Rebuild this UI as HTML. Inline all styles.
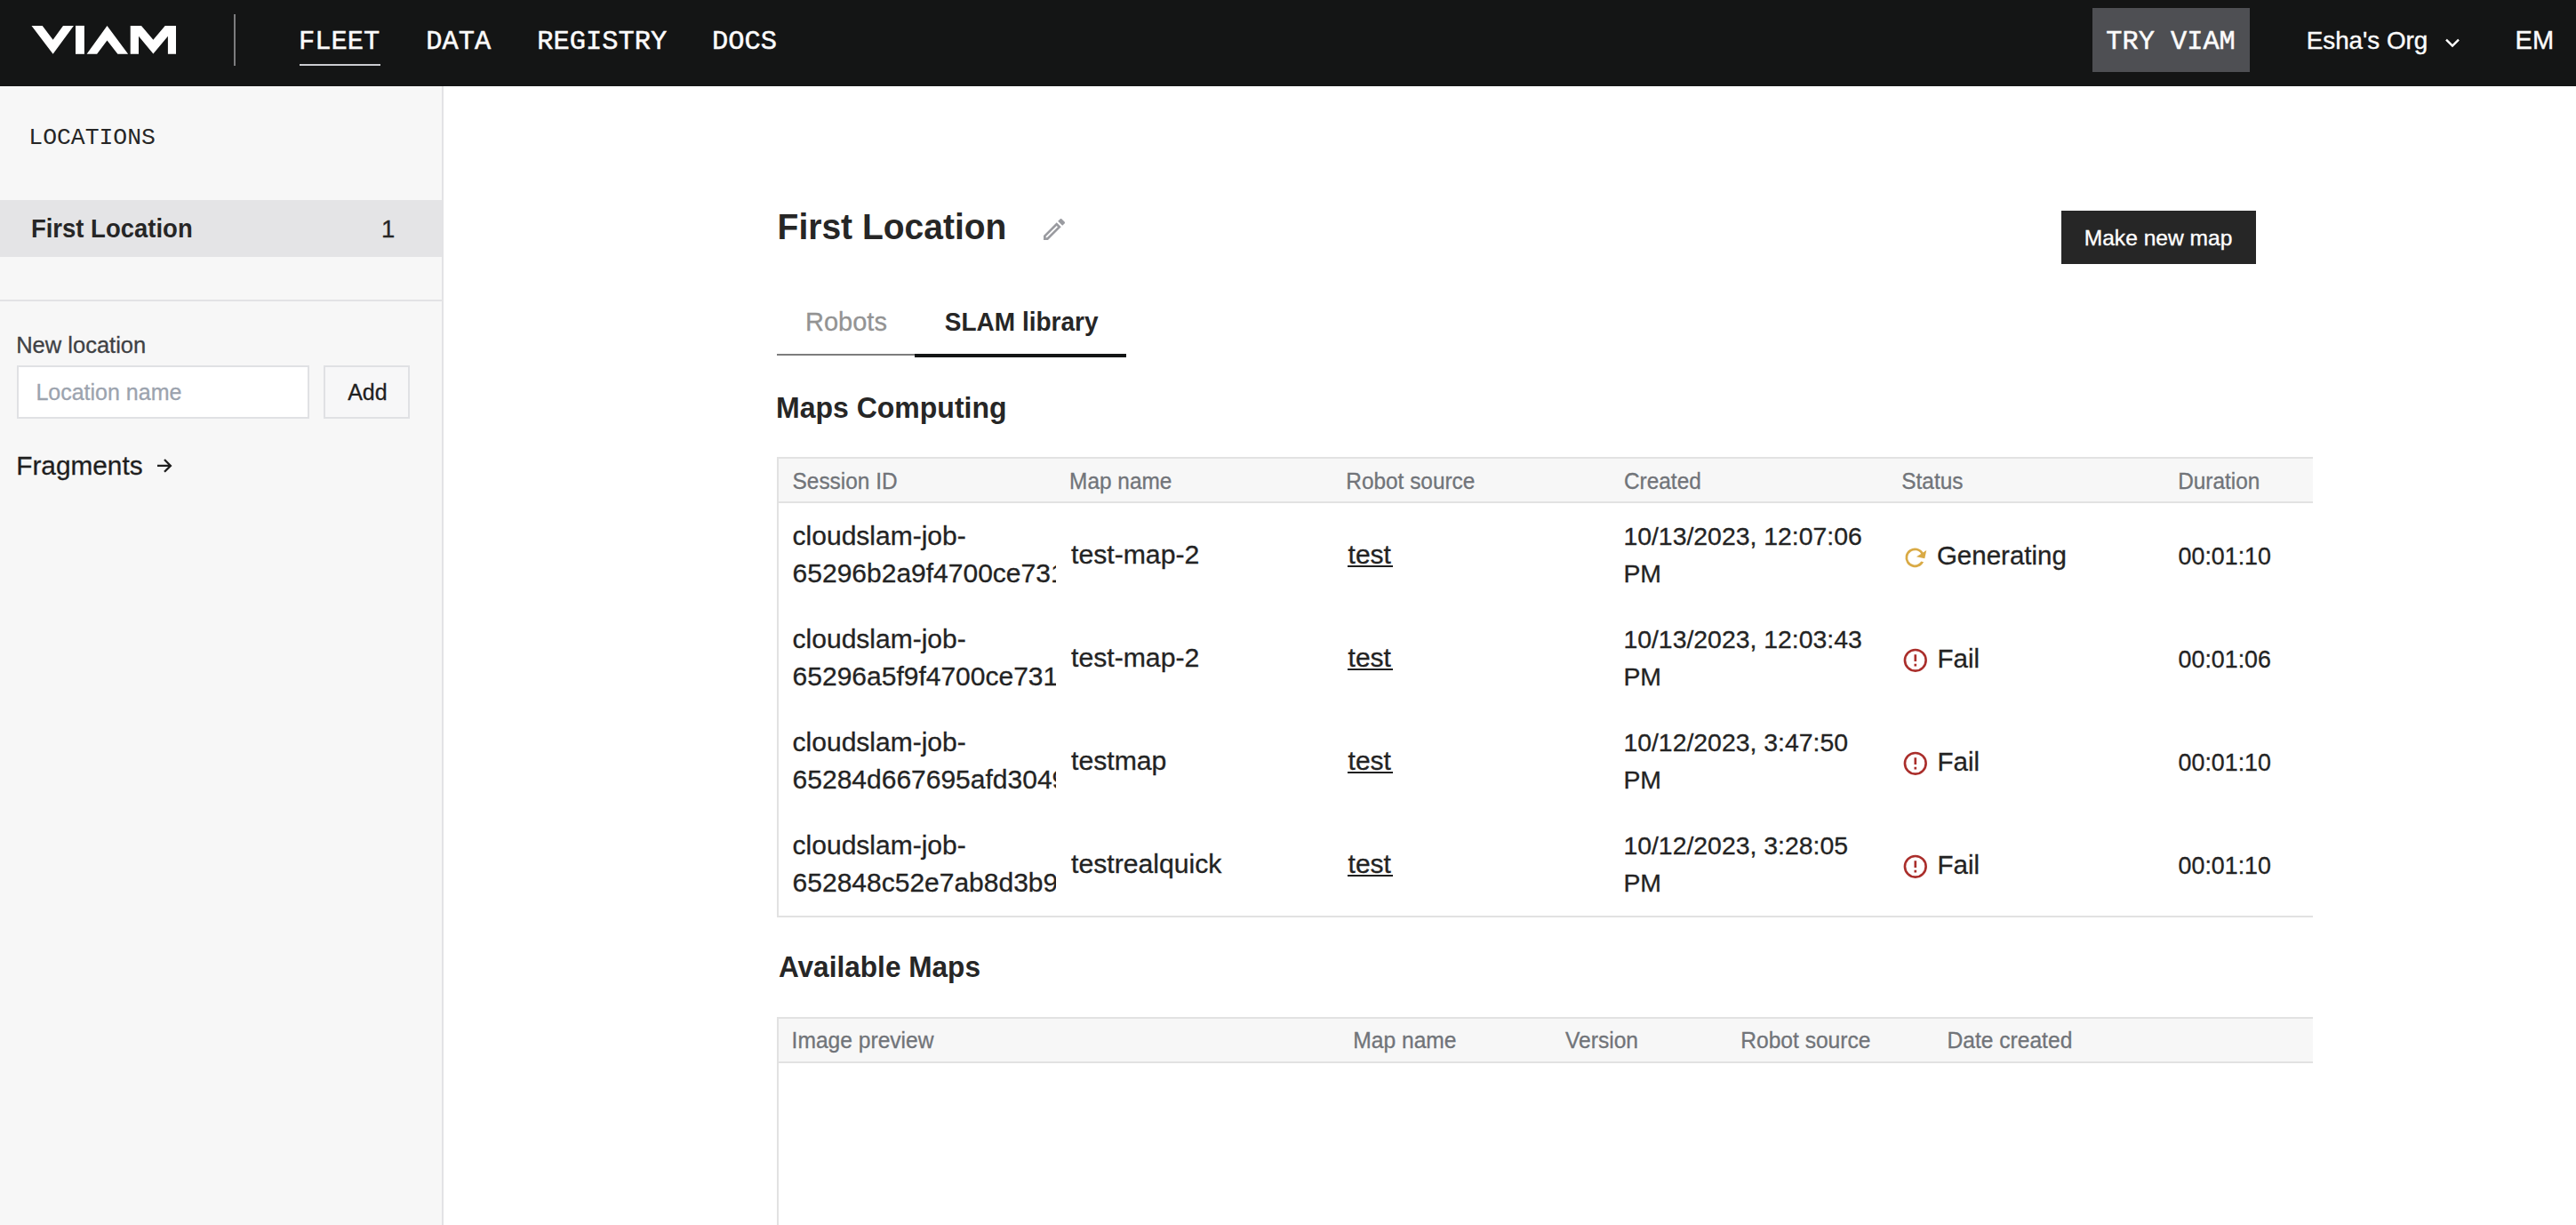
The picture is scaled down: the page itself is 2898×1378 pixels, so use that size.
<!DOCTYPE html>
<html><head><meta charset="utf-8"><title>Viam - First Location</title>
<style>
html,body{margin:0;padding:0;width:2898px;height:1378px;overflow:hidden;background:#ffffff;}
body{position:relative;font-family:'Liberation Sans', sans-serif;}
.r{position:absolute;}
.s{position:absolute;display:block;}
.t{position:absolute;white-space:pre;line-height:normal;}
.clip{position:absolute;left:876px;top:566px;width:312px;height:464px;overflow:hidden;}
.clip .t{margin-left:-876px;margin-top:-566px;}
</style></head><body>
<div class="r" style="left:0px;top:0px;width:2898px;height:97px;background:#141515;"></div>
<div class="r" style="left:263px;top:16px;width:2px;height:58px;background:#7c7c7e;"></div>
<div class="r" style="left:337px;top:72px;width:91px;height:2px;background:#cbccd0;"></div>
<div class="r" style="left:2354px;top:9px;width:177px;height:72px;background:#4e4f53;"></div>
<div class="r" style="left:0px;top:97px;width:497px;height:1281px;background:#f7f7f7;"></div>
<div class="r" style="left:497px;top:97px;width:2px;height:1281px;background:#e3e3e5;"></div>
<div class="r" style="left:0px;top:225px;width:497px;height:64px;background:#e4e4e6;"></div>
<div class="r" style="left:0px;top:337px;width:497px;height:2px;background:#e3e3e5;"></div>
<div class="r" style="left:19px;top:411px;width:329px;height:60px;background:#ffffff;box-sizing:border-box;border:2px solid #e0e1e4;"></div>
<div class="r" style="left:364px;top:411px;width:97px;height:60px;background:#f7f7f8;box-sizing:border-box;border:2px solid #e0e1e4;"></div>
<div class="r" style="left:2319px;top:237px;width:219px;height:60px;background:#262626;"></div>
<div class="r" style="left:874px;top:398px;width:155px;height:2px;background:#7d7d7d;"></div>
<div class="r" style="left:1029px;top:398px;width:238px;height:4px;background:#131515;"></div>
<div class="r" style="left:874px;top:514px;width:1728px;height:2px;background:#e2e2e2;"></div>
<div class="r" style="left:874px;top:514px;width:2px;height:518px;background:#e2e2e2;"></div>
<div class="r" style="left:876px;top:516px;width:1726px;height:48px;background:#f7f7f7;"></div>
<div class="r" style="left:876px;top:564px;width:1726px;height:2px;background:#e2e2e2;"></div>
<div class="r" style="left:874px;top:1030px;width:1728px;height:2px;background:#e2e2e2;"></div>
<div class="r" style="left:1516px;top:636px;width:51px;height:2px;background:#1f1f1f;"></div>
<div class="r" style="left:1516px;top:752px;width:51px;height:2px;background:#1f1f1f;"></div>
<div class="r" style="left:1516px;top:868px;width:51px;height:2px;background:#1f1f1f;"></div>
<div class="r" style="left:1516px;top:984px;width:51px;height:2px;background:#1f1f1f;"></div>
<div class="r" style="left:874px;top:1144px;width:1728px;height:2px;background:#e2e2e2;"></div>
<div class="r" style="left:874px;top:1144px;width:2px;height:234px;background:#e2e2e2;"></div>
<div class="r" style="left:876px;top:1146px;width:1726px;height:48px;background:#f7f7f7;"></div>
<div class="r" style="left:876px;top:1194px;width:1726px;height:2px;background:#e2e2e2;"></div>
<svg class="s" style="left:0;top:0" width="220" height="96" viewBox="0 0 220 96"><g fill="#ffffff">
<path d="M35.5 28.9H47.7L59.6 44.8L71.0 28.9H82.9L59.6 60.8Z"/>
<path d="M85.0 28.9H94.9V60.8H85.0Z"/>
<path d="M97.6 60.8L120.5 29.1L144.1 60.8H132.4L120.5 45.4L109.1 60.8Z"/>
<path d="M146.7 28.9H159.0L172.4 44.8L185.7 28.9H198.0V60.8H188.9V40.8L172.4 60.6L156.0 40.8V60.8H146.7Z"/>
</g></svg>
<svg class="s" style="left:2740px;top:30px" width="40" height="35" viewBox="2740 30 40 35"><path d="M2752 44.6L2759 51.6L2766 44.6" fill="none" stroke="#ffffff" stroke-width="2.4"/></svg>
<svg class="s" style="left:1170px;top:242px" width="32" height="32" viewBox="0 0 24 24"><path fill="#9a9ba0" d="M14.06,9L15,9.94L5.92,19H5V18.08L14.06,9M17.66,3C17.41,3 17.15,3.1 16.96,3.29L15.13,5.12L18.88,8.87L20.71,7.04C21.1,6.65 21.1,6 20.71,5.63L18.37,3.29C18.17,3.09 17.92,3 17.66,3M14.06,6.19L3,17.25V21H6.75L17.81,9.94L14.06,6.19Z"/></svg>
<svg class="s" style="left:170px;top:505px" width="30" height="40" viewBox="170 505 30 40"><path d="M177 523.9H192M185 517L191.9 523.9L185 530.8" fill="none" stroke="#1f1f1f" stroke-width="2.3"/></svg>
<svg class="s" style="left:2138.2px;top:610.6px" width="32.7" height="32.7" viewBox="0 0 24 24"><path transform="rotate(12 12 12)" fill="#d9aa45" d="M17.65,6.35C16.2,4.9 14.21,4 12,4A8,8 0 0,0 4,12A8,8 0 0,0 12,20C15.73,20 18.84,17.45 19.73,14H17.65C16.83,16.33 14.61,18 12,18A6,6 0 0,1 6,12A6,6 0 0,1 12,6C13.66,6 15.14,6.69 16.22,7.78L13,11H20V4L17.65,6.35Z"/></svg>
<svg class="s" style="left:2139.2px;top:727.3px" width="31.6" height="31.6" viewBox="0 0 24 24"><path fill="#aa2e2b" d="M11,15H13V17H11V15M11,7H13V13H11V7M12,2C6.47,2 2,6.5 2,12A10,10 0 0,0 12,22A10,10 0 0,0 22,12A10,10 0 0,0 12,2M12,20A8,8 0 0,1 4,12A8,8 0 0,1 12,4A8,8 0 0,1 20,12A8,8 0 0,1 12,20Z"/></svg>
<svg class="s" style="left:2139.2px;top:843.3px" width="31.6" height="31.6" viewBox="0 0 24 24"><path fill="#aa2e2b" d="M11,15H13V17H11V15M11,7H13V13H11V7M12,2C6.47,2 2,6.5 2,12A10,10 0 0,0 12,22A10,10 0 0,0 22,12A10,10 0 0,0 12,2M12,20A8,8 0 0,1 4,12A8,8 0 0,1 12,4A8,8 0 0,1 20,12A8,8 0 0,1 12,20Z"/></svg>
<svg class="s" style="left:2139.2px;top:959.3px" width="31.6" height="31.6" viewBox="0 0 24 24"><path fill="#aa2e2b" d="M11,15H13V17H11V15M11,7H13V13H11V7M12,2C6.47,2 2,6.5 2,12A10,10 0 0,0 12,22A10,10 0 0,0 22,12A10,10 0 0,0 12,2M12,20A8,8 0 0,1 4,12A8,8 0 0,1 12,4A8,8 0 0,1 20,12A8,8 0 0,1 12,20Z"/></svg>
<div class="t" style="left:336.00px;top:30.20px;font-family:'Liberation Mono', monospace;font-size:30.4px;color:#fbfbfb;-webkit-text-stroke:0.5px #fbfbfb;">FLEET</div>
<div class="t" style="left:479.20px;top:30.20px;font-family:'Liberation Mono', monospace;font-size:30.4px;color:#fbfbfb;-webkit-text-stroke:0.5px #fbfbfb;">DATA</div>
<div class="t" style="left:604.30px;top:30.20px;font-family:'Liberation Mono', monospace;font-size:30.4px;color:#fbfbfb;-webkit-text-stroke:0.5px #fbfbfb;">REGISTRY</div>
<div class="t" style="left:801.10px;top:30.20px;font-family:'Liberation Mono', monospace;font-size:30.4px;color:#fbfbfb;-webkit-text-stroke:0.5px #fbfbfb;">DOCS</div>
<div class="t" style="left:2369.30px;top:30.20px;font-family:'Liberation Mono', monospace;font-size:30.3px;color:#fbfbfb;-webkit-text-stroke:0.5px #fbfbfb;">TRY VIAM</div>
<div class="t" style="left:2594.70px;top:30.20px;font-family:'Liberation Sans', sans-serif;font-size:27.8px;color:#fbfbfb;-webkit-text-stroke:0.4px #fbfbfb;">Esha&#x27;s Org</div>
<div class="t" style="left:2829.60px;top:29.20px;font-family:'Liberation Sans', sans-serif;font-size:29.0px;color:#fbfbfb;-webkit-text-stroke:0.4px #fbfbfb;">EM</div>
<div class="t" style="left:32.30px;top:140.10px;font-family:'Liberation Mono', monospace;font-size:26.4px;color:#262626;">LOCATIONS</div>
<div class="t" style="left:34.90px;top:242.00px;font-family:'Liberation Sans', sans-serif;font-size:27.5px;color:#262626;font-weight:700;transform:scaleY(1.045);transform-origin:0 25.00px;">First Location</div>
<div class="t" style="left:429.00px;top:242.00px;font-family:'Liberation Sans', sans-serif;font-size:27.5px;color:#262626;-webkit-text-stroke:0.3px #262626;">1</div>
<div class="t" style="left:18.20px;top:373.50px;font-family:'Liberation Sans', sans-serif;font-size:25.5px;color:#3f4144;-webkit-text-stroke:0.3px #3f4144;">New location</div>
<div class="t" style="left:40.40px;top:427.40px;font-family:'Liberation Sans', sans-serif;font-size:25.0px;color:#9ca3ae;-webkit-text-stroke:0.3px #9ca3ae;">Location name</div>
<div class="t" style="left:391.20px;top:427.40px;font-family:'Liberation Sans', sans-serif;font-size:25.0px;color:#1f1f1f;-webkit-text-stroke:0.3px #1f1f1f;">Add</div>
<div class="t" style="left:18.20px;top:507.20px;font-family:'Liberation Sans', sans-serif;font-size:29.8px;color:#1f1f1f;-webkit-text-stroke:0.3px #1f1f1f;">Fragments</div>
<div class="t" style="left:874.60px;top:234.10px;font-family:'Liberation Sans', sans-serif;font-size:39.0px;color:#262626;font-weight:700;transform:scaleY(1.05);transform-origin:0 35.00px;">First Location</div>
<div class="t" style="left:2344.70px;top:253.80px;font-family:'Liberation Sans', sans-serif;font-size:24.6px;color:#ffffff;-webkit-text-stroke:0.35px #ffffff;">Make new map</div>
<div class="t" style="left:906.00px;top:346.00px;font-family:'Liberation Sans', sans-serif;font-size:29.0px;color:#939393;-webkit-text-stroke:0.3px #939393;">Robots</div>
<div class="t" style="left:1062.80px;top:347.00px;font-family:'Liberation Sans', sans-serif;font-size:28.0px;color:#262626;font-weight:700;transform:scaleY(1.08);transform-origin:0 25.00px;">SLAM library</div>
<div class="t" style="left:873.00px;top:441.00px;font-family:'Liberation Sans', sans-serif;font-size:32.0px;color:#262626;font-weight:700;transform:scaleY(1.03);transform-origin:0 29.00px;">Maps Computing</div>
<div class="t" style="left:875.90px;top:1069.80px;font-family:'Liberation Sans', sans-serif;font-size:31.6px;color:#262626;font-weight:700;transform:scaleY(1.03);transform-origin:0 29.00px;">Available Maps</div>
<div class="t" style="left:891.60px;top:527.60px;font-family:'Liberation Sans', sans-serif;font-size:24.4px;color:#717479;-webkit-text-stroke:0.3px #717479;transform:scaleY(1.06);transform-origin:0 22.00px;">Session ID</div>
<div class="t" style="left:1203.10px;top:527.60px;font-family:'Liberation Sans', sans-serif;font-size:24.4px;color:#717479;-webkit-text-stroke:0.3px #717479;transform:scaleY(1.06);transform-origin:0 22.00px;">Map name</div>
<div class="t" style="left:1514.30px;top:527.60px;font-family:'Liberation Sans', sans-serif;font-size:24.4px;color:#717479;-webkit-text-stroke:0.3px #717479;transform:scaleY(1.06);transform-origin:0 22.00px;">Robot source</div>
<div class="t" style="left:1827.00px;top:527.60px;font-family:'Liberation Sans', sans-serif;font-size:24.4px;color:#717479;-webkit-text-stroke:0.3px #717479;transform:scaleY(1.06);transform-origin:0 22.00px;">Created</div>
<div class="t" style="left:2139.30px;top:527.60px;font-family:'Liberation Sans', sans-serif;font-size:24.4px;color:#717479;-webkit-text-stroke:0.3px #717479;transform:scaleY(1.06);transform-origin:0 22.00px;">Status</div>
<div class="t" style="left:2450.20px;top:527.60px;font-family:'Liberation Sans', sans-serif;font-size:24.4px;color:#717479;-webkit-text-stroke:0.3px #717479;transform:scaleY(1.06);transform-origin:0 22.00px;">Duration</div>
<div class="t" style="left:891.60px;top:585.90px;font-family:'Liberation Sans', sans-serif;font-size:30.0px;color:#232323;-webkit-text-stroke:0.3px #232323;">cloudslam-job-</div>
<div class="t" style="left:1205.00px;top:606.50px;font-family:'Liberation Sans', sans-serif;font-size:30.2px;color:#232323;-webkit-text-stroke:0.3px #232323;">test-map-2</div>
<div class="t" style="left:1516.60px;top:606.70px;font-family:'Liberation Sans', sans-serif;font-size:30.0px;color:#232323;-webkit-text-stroke:0.3px #232323;">test</div>
<div class="t" style="left:1826.40px;top:586.90px;font-family:'Liberation Sans', sans-serif;font-size:28.4px;color:#232323;-webkit-text-stroke:0.3px #232323;">10/13/2023, 12:07:06</div>
<div class="t" style="left:1826.40px;top:628.90px;font-family:'Liberation Sans', sans-serif;font-size:28.4px;color:#232323;-webkit-text-stroke:0.3px #232323;">PM</div>
<div class="t" style="left:2178.90px;top:607.80px;font-family:'Liberation Sans', sans-serif;font-size:29.5px;color:#232323;-webkit-text-stroke:0.3px #232323;">Generating</div>
<div class="t" style="left:2450.60px;top:610.80px;font-family:'Liberation Sans', sans-serif;font-size:26.8px;color:#232323;-webkit-text-stroke:0.3px #232323;">00:01:10</div>
<div class="t" style="left:891.60px;top:701.90px;font-family:'Liberation Sans', sans-serif;font-size:30.0px;color:#232323;-webkit-text-stroke:0.3px #232323;">cloudslam-job-</div>
<div class="t" style="left:1205.00px;top:722.50px;font-family:'Liberation Sans', sans-serif;font-size:30.2px;color:#232323;-webkit-text-stroke:0.3px #232323;">test-map-2</div>
<div class="t" style="left:1516.60px;top:722.70px;font-family:'Liberation Sans', sans-serif;font-size:30.0px;color:#232323;-webkit-text-stroke:0.3px #232323;">test</div>
<div class="t" style="left:1826.40px;top:702.90px;font-family:'Liberation Sans', sans-serif;font-size:28.4px;color:#232323;-webkit-text-stroke:0.3px #232323;">10/13/2023, 12:03:43</div>
<div class="t" style="left:1826.40px;top:744.90px;font-family:'Liberation Sans', sans-serif;font-size:28.4px;color:#232323;-webkit-text-stroke:0.3px #232323;">PM</div>
<div class="t" style="left:2179.60px;top:723.80px;font-family:'Liberation Sans', sans-serif;font-size:29.5px;color:#232323;-webkit-text-stroke:0.3px #232323;">Fail</div>
<div class="t" style="left:2450.60px;top:726.80px;font-family:'Liberation Sans', sans-serif;font-size:26.8px;color:#232323;-webkit-text-stroke:0.3px #232323;">00:01:06</div>
<div class="t" style="left:891.60px;top:817.90px;font-family:'Liberation Sans', sans-serif;font-size:30.0px;color:#232323;-webkit-text-stroke:0.3px #232323;">cloudslam-job-</div>
<div class="t" style="left:1205.00px;top:838.50px;font-family:'Liberation Sans', sans-serif;font-size:30.2px;color:#232323;-webkit-text-stroke:0.3px #232323;">testmap</div>
<div class="t" style="left:1516.60px;top:838.70px;font-family:'Liberation Sans', sans-serif;font-size:30.0px;color:#232323;-webkit-text-stroke:0.3px #232323;">test</div>
<div class="t" style="left:1826.40px;top:818.90px;font-family:'Liberation Sans', sans-serif;font-size:28.4px;color:#232323;-webkit-text-stroke:0.3px #232323;">10/12/2023, 3:47:50</div>
<div class="t" style="left:1826.40px;top:860.90px;font-family:'Liberation Sans', sans-serif;font-size:28.4px;color:#232323;-webkit-text-stroke:0.3px #232323;">PM</div>
<div class="t" style="left:2179.60px;top:839.80px;font-family:'Liberation Sans', sans-serif;font-size:29.5px;color:#232323;-webkit-text-stroke:0.3px #232323;">Fail</div>
<div class="t" style="left:2450.60px;top:842.80px;font-family:'Liberation Sans', sans-serif;font-size:26.8px;color:#232323;-webkit-text-stroke:0.3px #232323;">00:01:10</div>
<div class="t" style="left:891.60px;top:933.90px;font-family:'Liberation Sans', sans-serif;font-size:30.0px;color:#232323;-webkit-text-stroke:0.3px #232323;">cloudslam-job-</div>
<div class="t" style="left:1205.00px;top:954.50px;font-family:'Liberation Sans', sans-serif;font-size:30.2px;color:#232323;-webkit-text-stroke:0.3px #232323;">testrealquick</div>
<div class="t" style="left:1516.60px;top:954.70px;font-family:'Liberation Sans', sans-serif;font-size:30.0px;color:#232323;-webkit-text-stroke:0.3px #232323;">test</div>
<div class="t" style="left:1826.40px;top:934.90px;font-family:'Liberation Sans', sans-serif;font-size:28.4px;color:#232323;-webkit-text-stroke:0.3px #232323;">10/12/2023, 3:28:05</div>
<div class="t" style="left:1826.40px;top:976.90px;font-family:'Liberation Sans', sans-serif;font-size:28.4px;color:#232323;-webkit-text-stroke:0.3px #232323;">PM</div>
<div class="t" style="left:2179.60px;top:955.80px;font-family:'Liberation Sans', sans-serif;font-size:29.5px;color:#232323;-webkit-text-stroke:0.3px #232323;">Fail</div>
<div class="t" style="left:2450.60px;top:958.80px;font-family:'Liberation Sans', sans-serif;font-size:26.8px;color:#232323;-webkit-text-stroke:0.3px #232323;">00:01:10</div>
<div class="t" style="left:890.60px;top:1156.60px;font-family:'Liberation Sans', sans-serif;font-size:24.6px;color:#717479;-webkit-text-stroke:0.3px #717479;transform:scaleY(1.06);transform-origin:0 22.00px;">Image preview</div>
<div class="t" style="left:1522.30px;top:1156.60px;font-family:'Liberation Sans', sans-serif;font-size:24.6px;color:#717479;-webkit-text-stroke:0.3px #717479;transform:scaleY(1.06);transform-origin:0 22.00px;">Map name</div>
<div class="t" style="left:1761.00px;top:1156.60px;font-family:'Liberation Sans', sans-serif;font-size:24.6px;color:#717479;-webkit-text-stroke:0.3px #717479;transform:scaleY(1.06);transform-origin:0 22.00px;">Version</div>
<div class="t" style="left:1958.20px;top:1156.60px;font-family:'Liberation Sans', sans-serif;font-size:24.6px;color:#717479;-webkit-text-stroke:0.3px #717479;transform:scaleY(1.06);transform-origin:0 22.00px;">Robot source</div>
<div class="t" style="left:2190.50px;top:1156.60px;font-family:'Liberation Sans', sans-serif;font-size:24.6px;color:#717479;-webkit-text-stroke:0.3px #717479;transform:scaleY(1.06);transform-origin:0 22.00px;">Date created</div>
<div class="clip">
<div class="t" style="left:891.60px;top:627.90px;font-family:'Liberation Sans', sans-serif;font-size:30.0px;color:#232323;-webkit-text-stroke:0.3px #232323;">65296b2a9f4700ce7319a0b2</div>
<div class="t" style="left:891.60px;top:743.90px;font-family:'Liberation Sans', sans-serif;font-size:30.0px;color:#232323;-webkit-text-stroke:0.3px #232323;">65296a5f9f4700ce7319a0a1</div>
<div class="t" style="left:891.60px;top:859.90px;font-family:'Liberation Sans', sans-serif;font-size:30.0px;color:#232323;-webkit-text-stroke:0.3px #232323;">65284d667695afd3049c2e11</div>
<div class="t" style="left:891.60px;top:975.90px;font-family:'Liberation Sans', sans-serif;font-size:30.0px;color:#232323;-webkit-text-stroke:0.3px #232323;">652848c52e7ab8d3b97a1c20</div>
</div>
</body></html>
